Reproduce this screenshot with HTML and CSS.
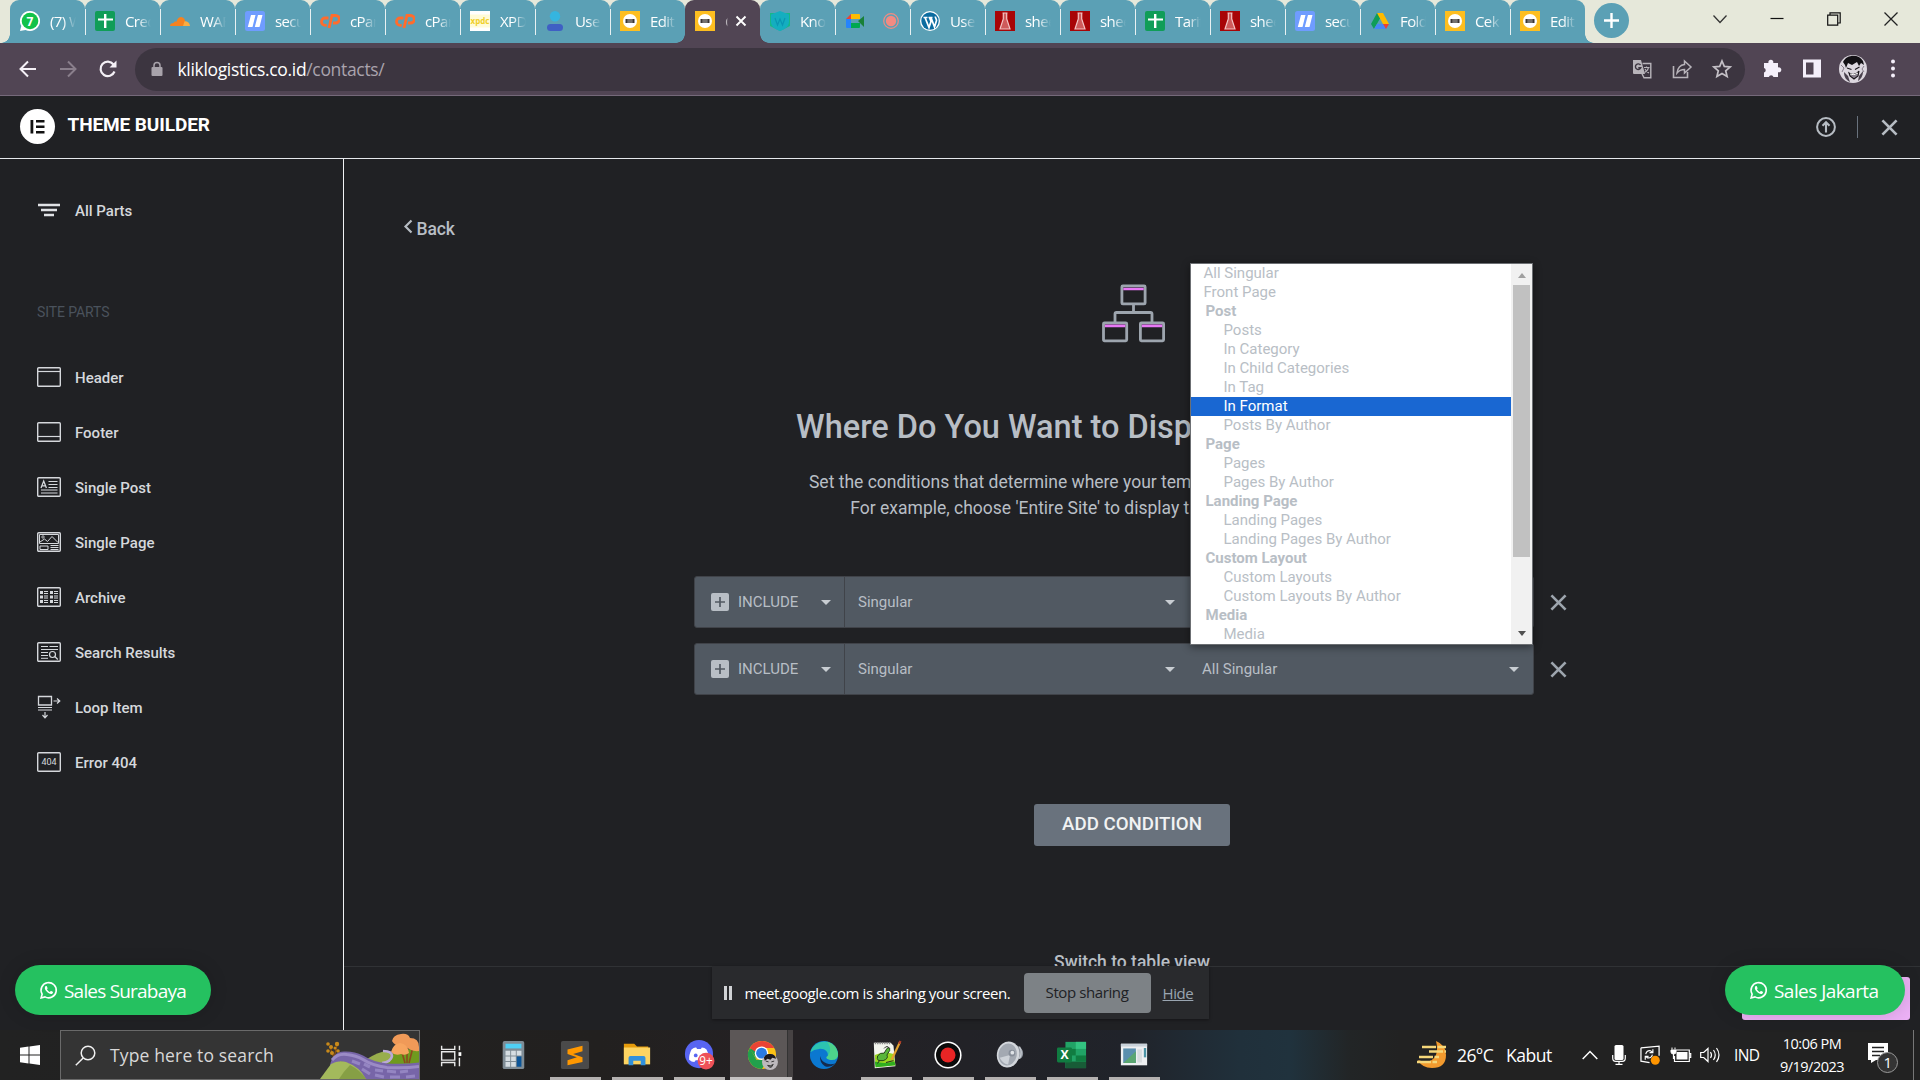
FILE: index.html
```html
<!DOCTYPE html>
<html lang="en">
<head>
<meta charset="utf-8">
<title>Theme Builder</title>
<link rel="stylesheet" href="styles.css">
</head>
<body>
<svg class="defs" aria-hidden="true">
  <symbol id="i-sheet" viewBox="0 0 20 20"><rect width="20" height="20" rx="2" fill="#109d58"/><path d="M9 3h2.400v4.400H18v2.200h-6.600V17H9V9.600H3V7.400h6z" fill="#fff"/></symbol>
  <symbol id="i-wa" viewBox="0 0 20 20"><path d="M10 0a10 10 0 1 1-4.500 18.900L0 20l1.300-5A10 10 0 0 1 10 0z" fill="#fff"/><circle cx="10" cy="10" r="8.300" fill="#12c24a"/><text x="10" y="14.500" text-anchor="middle" font-size="12" font-weight="700" fill="#fff">7</text></symbol>
  <symbol id="i-cloud" viewBox="0 0 20 20"><path d="M0 15c0-2 1.500-3 3.500-3 .4-1.500 2-2 3-1.300C7.500 7 10 5.700 12 6.200c2 .5 3 2 3.200 4.300L13.500 15z" fill="#f6821f"/><path d="M13 15l1.500-4.800c3-.2 5.300 1.600 5.500 4.800z" fill="#fbad41"/></symbol>
  <symbol id="i-sec" viewBox="0 0 20 20"><rect width="20" height="20" rx="2.500" fill="#6f9cff"/><path d="M6 4h4.500L7.500 16H2.800zM13 4h4.500l-3 12H9.800z" fill="#fff"/></symbol>
  <symbol id="i-cp" viewBox="0 0 20 20"><path d="M8.500 7H5.200a3.700 3.700 0 0 0 0 7.400h1.500M9 17l3-12.500h3.600a3.600 3.600 0 0 1 0 7.500H13" fill="none" stroke="#ff6c2c" stroke-width="2.800"/></symbol>
  <symbol id="i-xpdc" viewBox="0 0 20 20"><rect width="20" height="20" fill="#fff"/><rect y="3.500" width="20" height="13" fill="#fffbd8"/><text x="10" y="12.500" text-anchor="middle" font-size="8" font-weight="700" fill="#f0cf28">xpdc</text></symbol>
  <symbol id="i-user" viewBox="0 0 20 20"><circle cx="10" cy="5.300" r="5.200" fill="#35b5e0"/><rect x="2" y="13" width="16" height="7" rx="3.500" fill="#3f5fc4"/></symbol>
  <symbol id="i-gold" viewBox="0 0 20 20"><rect width="20" height="20" fill="#fdbe20"/><circle cx="10" cy="10" r="7" fill="#fff"/><path d="M5.500 8h2.300v4H5.500zM8.300 8h1.400v4H8.300zM10.300 8h1.400v4h-1.400zM12.200 8h2.300v4h-2.300z" fill="#3a3534"/></symbol>
  <symbol id="i-shield" viewBox="0 0 20 20"><path d="M0 2h20v13l-10 5-10-5z" fill="#16b887"/><path d="M10 0l9 3.500v7c0 5-4 7.500-9 9.500-5-2-9-4.500-9-9.500v-7z" fill="#14aec0"/><path d="M5 7l2.500 7L10 8l2.500 6L15 7" fill="none" stroke="#0b95b2" stroke-width="1.200"/></symbol>
  <symbol id="i-meet" viewBox="0 0 20 20"><path d="M1 8l5-5v5z" fill="#ea4335"/><path d="M6 3h8a1 1 0 0 1 1 1v4H6z" fill="#fbbc04"/><path d="M1 8h5v9H2a1 1 0 0 1-1-1z" fill="#2684fc"/><path d="M6 12h9v4a1 1 0 0 1-1 1H6z" fill="#00a84f"/><path d="M13 10l6-5v11z" fill="#188038"/></symbol>
  <symbol id="i-wp" viewBox="0 0 20 20"><circle cx="10" cy="10" r="10" fill="#fff"/><circle cx="10" cy="10" r="8.700" fill="#0c6ca0"/><path d="M3.500 6.500h4M5 6.500l4 10 2-6-1.500-4M8.500 6.500h4M11 6.500l3.500 9.500 2-6.500c0-2-1.500-2.500-1-4" fill="none" stroke="#fff" stroke-width="1.700"/></symbol>
  <symbol id="i-flask" viewBox="0 0 20 20"><rect width="20" height="20" fill="#a80507"/><path d="M7.500 2h5M8.300 2v6L5 18h10L11.700 8V2" fill="#cf5a5a" stroke="#f3c4c4" stroke-width="1.200"/></symbol>
  <symbol id="i-drive" viewBox="0 0 20 20"><path d="M7 2h6l-3 5.500L4 18 1 13z" fill="#0f9d58"/><path d="M7 2h6l6 11h-6z" fill="#ffba00"/><path d="M4 18l3-5h12l-3 5z" fill="#4688f4"/><path d="M13 13h6l-3 5z" fill="#ea4335"/></symbol>
  <symbol id="i-chat" viewBox="0 0 20 20"><path d="M2.200 17.800l1.100-4a8 8 0 1 1 3 2.900z" fill="none" stroke="#fff" stroke-width="1.700"/><path d="M6.800 5.600c.5-.5 1.200-.5 1.500.1l.7 1.600c.2.400-.4 1.200-.7 1.500.6 1.300 1.700 2.200 3 2.800.5-.4.900-1.300 1.500-1.100l1.700.8c.6.300 0 1.600-.6 2-2.700 1.500-8.500-3.600-7.700-6.500.1-.5.300-.9.600-1.200z" fill="#fff"/></symbol>
  <symbol id="i-frame" viewBox="0 0 24 20"><rect x=".7" y=".7" width="22.600" height="18.600" rx="1" fill="none" stroke="#d5d8dc" stroke-width="1.400"/></symbol>
  <symbol id="i-x" viewBox="0 0 18 18"><path d="M1.500 1.500l15 15m0-15l-15 15" fill="none" stroke="currentColor" stroke-width="2.800"/></symbol>
</svg>

<div class="tabstrip">
  <div class="tab first"><svg class="fav"><use href="#i-wa"/></svg><span>(7) W</span></div>
  <div class="tab"><svg class="fav"><use href="#i-sheet"/></svg><span>Cred</span></div>
  <div class="tab"><svg class="fav"><use href="#i-cloud"/></svg><span>WAF</span></div>
  <div class="tab"><svg class="fav"><use href="#i-sec"/></svg><span>secu</span></div>
  <div class="tab"><svg class="fav"><use href="#i-cp"/></svg><span>cPan</span></div>
  <div class="tab"><svg class="fav"><use href="#i-cp"/></svg><span>cPan</span></div>
  <div class="tab"><svg class="fav"><use href="#i-xpdc"/></svg><span>XPDC</span></div>
  <div class="tab"><svg class="fav"><use href="#i-user"/></svg><span>User</span></div>
  <div class="tab before"><svg class="fav"><use href="#i-gold"/></svg><span>Edit</span></div>
  <div class="tab active"><svg class="fav"><use href="#i-gold"/></svg><span class="sliver">C</span><svg class="tabx" viewBox="0 0 12 12"><path d="M1.500 1.500l9 9m0-9l-9 9" stroke="#fff" stroke-width="1.900"/></svg></div>
  <div class="tab after"><svg class="fav"><use href="#i-shield"/></svg><span>Know</span></div>
  <div class="tab"><svg class="fav"><use href="#i-meet"/></svg><svg class="rec" viewBox="0 0 16 16"><circle cx="8" cy="8" r="7.300" fill="none" stroke="#f28b82" stroke-width="1.200"/><circle cx="8" cy="8" r="5.200" fill="#f28b82"/></svg></div>
  <div class="tab"><svg class="fav"><use href="#i-wp"/></svg><span>User</span></div>
  <div class="tab"><svg class="fav"><use href="#i-flask"/></svg><span>shee</span></div>
  <div class="tab"><svg class="fav"><use href="#i-flask"/></svg><span>shee</span></div>
  <div class="tab"><svg class="fav"><use href="#i-sheet"/></svg><span>Tarif</span></div>
  <div class="tab"><svg class="fav"><use href="#i-flask"/></svg><span>shee</span></div>
  <div class="tab"><svg class="fav"><use href="#i-sec"/></svg><span>secu</span></div>
  <div class="tab"><svg class="fav"><use href="#i-drive"/></svg><span>Fold</span></div>
  <div class="tab"><svg class="fav"><use href="#i-gold"/></svg><span>Cek</span></div>
  <div class="tab last"><svg class="fav"><use href="#i-gold"/></svg><span>Edit</span></div>
  <svg class="newtab" viewBox="0 0 35 35"><circle cx="17.500" cy="17.500" r="17.500" fill="#5ba0b5"/><path d="M17.500 10v15M10 17.500h15" stroke="#fff" stroke-width="2.400"/></svg>
  <div class="winctl">
    <svg viewBox="0 0 14 14"><path d="M.5 3.500l6.500 7 6.500-7" fill="none" stroke="#333" stroke-width="1.300"/></svg>
    <svg viewBox="0 0 14 14"><path d="M.5 6.500h13" stroke="#111" stroke-width="1.200"/></svg>
    <svg viewBox="0 0 14 14"><path d="M.7 3.200h10v10h-10zM3 3V.8h10.200V11H11" fill="none" stroke="#111" stroke-width="1.200"/></svg>
    <svg viewBox="0 0 14 14"><path d="M.5.5l13 13m0-13l-13 13" stroke="#222" stroke-width="1.300"/></svg>
  </div>
</div>

<div class="toolbar">
  <div class="nav">
    <svg viewBox="0 0 18 18"><path d="M17 9H2M9 1.500L1.500 9 9 16.500" fill="none" stroke="#f4f0f6" stroke-width="2"/></svg>
    <svg viewBox="0 0 18 18"><path d="M1 9h15M9 1.500L16.500 9 9 16.500" fill="none" stroke="#8a7f8c" stroke-width="2"/></svg>
    <svg viewBox="0 0 18 18"><path d="M15.500 11.500A7.200 7.200 0 1 1 14.500 4.500" fill="none" stroke="#f4f0f6" stroke-width="2.200"/><path d="M17.500.5v7h-7z" fill="#f4f0f6"/></svg>
  </div>
  <div class="omnibox">
    <svg class="lock" viewBox="0 0 12 14"><rect x=".5" y="5" width="11" height="9" rx="1" fill="#a8a3ab"/><path d="M3 6V3.600a3 3 0 0 1 6 0V6" fill="none" stroke="#a8a3ab" stroke-width="1.500"/></svg>
    <div class="url">kliklogistics.co.id<i>/contacts/</i></div>
    <div class="omni-icons">
      <svg viewBox="0 0 20 20"><path d="M1 1h8l4 14H2a1 1 0 0 1-1-1z" fill="#b8b4ba"/><path d="M10.500 4.500h8.300v14.300H12l-2-4" fill="none" stroke="#b8b4ba" stroke-width="1.400"/><path d="M8.500 6A2.800 2.800 0 1 0 8.800 8.800H6.300" fill="none" stroke="#3c3540" stroke-width="1.400"/><path d="M12 8.500h5.500M14.500 7.500V9M16.500 8.500c-.5 2.500-2 4-4 5M13 10c1 2 2 3 4 4" fill="none" stroke="#b8b4ba" stroke-width="1.100"/></svg>
      <svg viewBox="0 0 20 20"><path d="M1.500 7v11.500h14V13" fill="none" stroke="#b8b4ba" stroke-width="1.600"/><path d="M12.500 2l6.500 6-6.500 6v-3.500c-3.500 0-5.500 1-7.500 3.500.6-4.500 3-8 7.500-8.500z" fill="none" stroke="#b8b4ba" stroke-width="1.500"/></svg>
      <svg viewBox="0 0 20 20"><path d="M10 2l2.300 5.400 5.900.5-4.500 3.900 1.400 5.700L10 14.500l-5.100 3 1.400-5.700L1.800 7.900l5.900-.5z" fill="none" stroke="#c4c0c6" stroke-width="1.700"/></svg>
    </div>
  </div>
  <div class="tb-icons">
    <svg viewBox="0 0 20 20"><path d="M2 4h4.500a2.500 2.500 0 1 1 4.700 0H16v4.500a2.500 2.500 0 1 1 0 4.700V18h-4.500a2.500 2.500 0 0 0-4.700 0H2v-4.500a2.400 2.400 0 0 0 0-4.600z" fill="#f4effa"/></svg>
    <svg viewBox="0 0 20 20"><path d="M1 .5h18v18H1zM4 3.500v12h7.500v-12z" fill="#f4effa" fill-rule="evenodd"/></svg>
    <svg class="avatar" viewBox="0 0 28 28"><circle cx="14" cy="14" r="14" fill="#dcd7df"/><path d="M4 7C8-1 20-1 24 6l1 4-3-2-2 3-2-4-5 3-4-2-2 5-1-3z" fill="#121014"/><path d="M8 13l4.500 1.500M16 14.500l4.500-2.500M10 18c4 3 7 2 10-2l-1 5-4 3-4-3z" stroke="#1a161c" stroke-width="1.100" fill="#8a8290"/><path d="M11 19q4 2 8-1" stroke="#fff" fill="none"/><path d="M5 17l4 4 2 6C7 25 5 22 5 17zM24 16l-4 5-1 5c3-2 5-5 5-10z" fill="#4a424e"/><path d="M2 10l3 3-2 4M25 11l-2 3 2 3" stroke="#847b88" fill="none"/></svg>
    <svg class="dots" viewBox="0 0 20 20"><g fill="#f4effa"><circle cx="10" cy="2.500" r="2"/><circle cx="10" cy="9.500" r="2"/><circle cx="10" cy="16.500" r="2"/></g></svg>
  </div>
</div>

<header class="apphead">
  <svg class="logo" viewBox="0 0 35 35"><circle cx="17.500" cy="17.500" r="17.500" fill="#fff"/><path d="M10.500 11h2.800v13.500h-2.800zM16 11h8.500v2.600H16zM16 16.400h8.500V19H16zM16 21.900h8.500v2.600H16z" fill="#111"/></svg>
  <h1>THEME BUILDER</h1>
  <svg class="up" viewBox="0 0 20 20"><circle cx="10" cy="10" r="8.900" fill="none" stroke="#b6bcc3" stroke-width="2"/><path d="M10 15.500V6M6.500 8.800L10 5.300l3.500 3.500" fill="none" stroke="#b6bcc3" stroke-width="2.100"/></svg>
  <span class="vline"></span>
  <svg class="close"><use href="#i-x"/></svg>
</header>

<div class="work">
  <aside>
    <div class="item all"><svg viewBox="0 0 24 20"><path d="M1 5h22M4 10h16M7 15h10" stroke="#e0e2e5" stroke-width="2.300"/></svg>All Parts</div>
    <h2>SITE PARTS</h2>
    <div class="item"><svg viewBox="0 0 24 20"><use href="#i-frame"/><path d="M1 4.500h22" stroke="#d5d8dc" stroke-width="1.200"/></svg>Header</div>
    <div class="item"><svg viewBox="0 0 24 20"><use href="#i-frame"/><path d="M1 14.500h22" stroke="#d5d8dc" stroke-width="1.200"/></svg>Footer</div>
    <div class="item"><svg viewBox="0 0 24 20"><use href="#i-frame"/><path d="M11.500 4.500h9M11.500 7.500h9M11.500 10.500h9M4 13h16.500M4 16h16.500" stroke="#d5d8dc"/><path d="M4 11l2.700-7 2.700 7M5 8.800h3.500" fill="none" stroke="#d5d8dc" stroke-width="1.300"/></svg>Single Post</div>
    <div class="item"><svg viewBox="0 0 24 20"><use href="#i-frame"/><path d="M2.500 2.500h19v9h-19zM3 10l4.500-3 3 2.500 4.500-5 6 6M3 14h8v3.500H3zM13.500 13.500h8M13.500 15.500h8M13.500 17.500h8" fill="none" stroke="#d5d8dc"/><circle cx="6" cy="5" r="1.200" fill="none" stroke="#d5d8dc" stroke-width=".8"/></svg>Single Page</div>
    <div class="item"><svg viewBox="0 0 24 20"><use href="#i-frame"/><path d="M4.500 4v13M14.500 4v13" stroke="#d5d8dc" stroke-width="3" stroke-dasharray="3 1.500"/><path d="M7 4.500h4M7 6.500h4M7 9h4M7 11h4M7 13.500h4M7 15.500h4M17 4.500h4M17 6.500h4M17 9h4M17 11h4M17 13.500h4M17 15.500h4" stroke="#d5d8dc"/></svg>Archive</div>
    <div class="item"><svg viewBox="0 0 24 20"><use href="#i-frame"/><path d="M4 4.500h7M12.500 4.500H21M4 7.500h17M4 10.500h7M4 13.500h7M4 16.300h7" stroke="#d5d8dc"/><circle cx="15.500" cy="12.500" r="3" fill="none" stroke="#d5d8dc" stroke-width="1.200"/><path d="M17.800 14.500l3 3" stroke="#d5d8dc" stroke-width="1.200"/></svg>Search Results</div>
    <div class="item"><svg class="tall" viewBox="0 0 24 24"><path d="M1.500 1.500h13v8.500h-13z" fill="none" stroke="#d5d8dc" stroke-width="1.300"/><path d="M1 12.500h14M1 15h14M16.500 6h6M20 3.500L22.800 6 20 8.500M8 17v5.500M5.500 20L8 22.800l2.500-2.800" fill="none" stroke="#d5d8dc" stroke-width="1.200"/></svg>Loop Item</div>
    <div class="item"><svg viewBox="0 0 24 20"><use href="#i-frame"/><text x="12" y="13.300" text-anchor="middle" font-size="9" font-weight="400" fill="#d5d8dc">404</text></svg>Error 404</div>
  </aside>

  <main>
    <div class="pane">
      <div class="back"><svg viewBox="0 0 9 15"><path d="M7.500 1.500l-6 6 6 6" fill="none" stroke="#b6bcc3" stroke-width="2.200"/></svg>Back</div>
      <svg class="tree" viewBox="0 0 64 59"><g fill="none" stroke="#9da5ae" stroke-width="2.800"><rect x="19.900" y="1.900" width="23.200" height="18" rx="1"/><rect x="1.500" y="38.800" width="23.200" height="18" rx="1"/><rect x="38.400" y="38.800" width="23.200" height="18" rx="1"/><path d="M31.500 20v8.700M13 38V30q0-1.500 1.500-1.500h34q1.500 0 1.500 1.500v8"/></g><path d="M21.300 5h20.400M2.900 41.900h20.400M39.800 41.900h20.400" stroke="#e877f5" stroke-width="2.600"/></svg>
      <h3>Where Do You Want to Display Your Template?</h3>
      <p>Set the conditions that determine where your template is used throughout your site.<br>For example, choose 'Entire Site' to display the template across your site.</p>

      <div class="cond">
        <div class="selects">
          <div class="inc"><svg class="plus" viewBox="0 0 18 18"><rect width="18" height="18" rx="2" fill="#b8bec5"/><path d="M9 4v10M4 9h10" stroke="#515962" stroke-width="1.700"/></svg>INCLUDE<i class="caret"></i></div>
          <div class="sel kind">Singular<i class="caret"></i></div>
          <div class="sel what"><i class="caret"></i></div>
          <div class="menu">
            <ul>
              <li class="top">All Singular</li><li class="top">Front Page</li>
              <li class="grp">Post</li><li>Posts</li><li>In Category</li><li>In Child Categories</li><li>In Tag</li><li class="hot">In Format</li><li>Posts By Author</li>
              <li class="grp">Page</li><li>Pages</li><li>Pages By Author</li>
              <li class="grp">Landing Page</li><li>Landing Pages</li><li>Landing Pages By Author</li>
              <li class="grp">Custom Layout</li><li>Custom Layouts</li><li>Custom Layouts By Author</li>
              <li class="grp">Media</li><li>Media</li>
            </ul>
            <div class="sbar"><i class="arr up-arr"></i><div class="thumb"></div><i class="arr down-arr"></i></div>
          </div>
        </div>
        <svg class="del"><use href="#i-x"/></svg>
      </div>
      <div class="cond">
        <div class="selects">
          <div class="inc"><svg class="plus" viewBox="0 0 18 18"><rect width="18" height="18" rx="2" fill="#b8bec5"/><path d="M9 4v10M4 9h10" stroke="#515962" stroke-width="1.700"/></svg>INCLUDE<i class="caret"></i></div>
          <div class="sel kind">Singular<i class="caret"></i></div>
          <div class="sel what">All Singular<i class="caret"></i></div>
        </div>
        <svg class="del"><use href="#i-x"/></svg>
      </div>
      <button class="add">ADD CONDITION</button>
      <div class="switch">Switch to table view</div>
    </div>
    <footer></footer>
  </main>

  <div class="chat left"><svg><use href="#i-chat"/></svg><span>Sales Surabaya</span></div>
  <div class="pink"></div>
  <div class="chat right"><svg><use href="#i-chat"/></svg><span>Sales Jakarta</span></div>
  <div class="share">
    <i class="pause"></i><span class="msg">meet.google.com is sharing your screen.</span><span class="stop">Stop sharing</span><span class="hide">Hide</span>
  </div>
</div>

<div class="taskbar">
  <div class="start"><svg viewBox="0 0 20 20"><path d="M0 2.800l8.500-1.200v8H0zM9.500 1.400L20 0v9.600H9.500zM0 10.500h8.500v8L0 17.300zM9.500 10.500H20V20L9.500 18.600z" fill="#fff"/></svg></div>
  <div class="search">
    <svg class="mag" viewBox="0 0 21 21"><circle cx="13" cy="8" r="6.800" fill="none" stroke="#f0f0f0" stroke-width="1.500"/><path d="M8.200 13L.8 20.300" stroke="#f0f0f0" stroke-width="1.500"/></svg>
    <span>Type here to search</span>
    <svg class="art" viewBox="0 0 99 48">
      <path d="M62 32Q70 17 99 18v16H62z" fill="#6f9a1e"/>
      <path d="M14 27L10 16M14 27l3-13" stroke="#8a4f10" stroke-width="1.300" fill="none"/>
      <g fill="#c98a1a"><circle cx="8" cy="13" r="1.800"/><circle cx="11" cy="16" r="2"/><circle cx="17" cy="13" r="2.200"/><circle cx="8" cy="20" r="1.800"/><circle cx="12" cy="22" r="2"/><circle cx="18" cy="20" r="1.800"/><circle cx="15" cy="17" r="1.500"/></g>
      <path d="M85 32L81 18M87 32V18M89 32l4-16" stroke="#8c4a1e" stroke-width="1.600"/>
      <path d="M72 10q1-6 9-7 7-1 9 4 9 0 9 9v4q-8 1-14-5-9 2-13-5z" fill="#f09a58"/><path d="M71 21q2-8 9-9 8 1 9 10-4 3-8 1-6 2-10-2z" fill="#f7a55f"/>
      <path d="M47 28Q58 21 66 20q8 1 7 6-3 7-12 7-8-1-14-5z" fill="#98ae4c"/><path d="M63 20q9 0 9 5-1 6-10 7" fill="none" stroke="#b9a9d6" stroke-width="2.600"/>
      <path d="M10 35Q12 21 24 20.500q10-.5 19 4 9 6 24 8 18 1 32-1V48H42Q36 34 24 31q-8-1-14 4z" fill="#7765a8"/>
      <path d="M12 29Q18 22 27 23.500q9 1 16 5 9 6 24 8 18 1 32-1" fill="none" stroke="#9b8bc6" stroke-width="3"/>
      <path d="M32 30l8 3M42 38l8 5M44 33l6 3M55 39l8 1M67 40l9 1M80 41l8-1M55 44l9 2M70 46l10 0M86 46l9-1" fill="none" stroke="#9485c2" stroke-width="3.200"/>
      <path d="M0 48L11 33Q18 29 26 31q14 5 20 17z" fill="#a3b95c"/><path d="M19 48q5-8 11-14 10 5 16 14z" fill="#6f8a33" opacity=".55"/>
    </svg>
  </div>
  <div class="apps">
    <div class="app"><svg viewBox="0 0 32 32"><path d="M6 6v4h14V6M6 28v-4h14v4M6 12.500h14v9H6zM25 6v5M25 19v9" fill="none" stroke="#e9e9e9" stroke-width="1.500"/><path d="M24 13h3v4h-3z" fill="#fff"/></svg></div>
    <div class="app"><svg viewBox="0 0 32 32"><rect x="5" y="1" width="23" height="30" rx="2" fill="#7f8c95"/><rect x="8" y="4" width="17" height="5" fill="#4fd0f5"/><path d="M8 11.500h5v5H8zM14 11.500h5v5h-5zM20 11.500h5v5h-5zM8 17.500h5v5H8zM14 17.500h5v5h-5zM8 23.500h5v5H8zM14 23.500h5v5h-5z" fill="#d5dde2"/><path d="M20 17.500h5v11h-5z" fill="#0b5598"/></svg></div>
    <div class="app run"><svg viewBox="0 0 32 32"><rect x="1" y="1" width="30" height="30" rx="2" fill="#4a4a4a"/><path d="M24 6v6l-10 3 10 3.500v5L8 27v-5.500l10-3L8 15V10z" fill="#ff9800"/></svg></div>
    <div class="app run"><svg viewBox="0 0 32 32"><path d="M2 4h11l3 3h12v18H2z" fill="#e59b0b"/><path d="M2 8h28v18H2z" fill="#fcd462"/><path d="M7 27v-8q0-2 2-2h14q2 0 2 2v8h-5v-5h-8v5z" fill="#3190db"/></svg></div>
    <div class="app run"><svg viewBox="0 0 32 32"><circle cx="16" cy="15" r="15" fill="#5865f2"/><path d="M8 10q3-2.500 5-2l1 1.500h4L19 8q3 0 5 2 3 6 2.500 11-3 2.500-5.500 2.500l-1.500-2h-7l-1.500 2q-3 0-5.500-2.500Q5 16 8 10z" fill="#fff"/><circle cx="12.500" cy="16.500" r="2" fill="#5865f2"/><circle cx="23.500" cy="22.500" r="9" fill="#ee5158"/><text x="23.500" y="27" text-anchor="middle" font-size="12.500" fill="#fff">9+</text></svg></div>
    <div class="app run on"><svg viewBox="0 0 32 32"><circle cx="16" cy="16" r="15" fill="#fbc116"/><path d="M3 8.500A15 15 0 0 0 16 31l6-10H10z" fill="#22a04c"/><path d="M2.700 9L10 20l4-11z" fill="#22a04c"/><path d="M3 8.500A15 15 0 0 1 29 8.500H14l-5 4z" fill="#ea4335"/><circle cx="15.500" cy="14" r="7.200" fill="#fff"/><circle cx="15.500" cy="14" r="5.800" fill="#2a7be4"/><circle cx="24.500" cy="23.500" r="8.500" fill="#bdb9bd"/><path d="M18 19q2-5 7-4 5 0 6 5l-4-1-2 2-3-1-3 2z" fill="#1b181c"/><path d="M20 22.500l3 .8M26 23.300l3-.8M22 27q3 1.500 6-1l-2 3h-2z" stroke="#333" fill="#777"/></svg></div>
    <div class="app"><svg viewBox="0 0 32 32"><circle cx="16" cy="16" r="15" fill="#0b78d0"/><path d="M1.500 13A15 15 0 0 1 31 15c0 6-5 7-9 6-4-1-4-3-2-4 1-4-3-8-9-7.500Q5 10 1.500 13z" fill="#2cc3b0"/><path d="M19 1.500Q30 4 31 15c0 6-5 7-9 6-4-1-4-3-2-4 2-3 5-8-1-15.500z" fill="#5fdb78" opacity=".65"/><path d="M12 17q-1 7 5 11 6 2 11-3-5 1.500-9 0-6-2-7-8z" fill="#152a4d"/></svg></div>
    <div class="app run"><svg viewBox="0 0 32 32"><path d="M3 3h18l3 3 2 22-22 2z" fill="#f3f5ee"/><path d="M4 16q10-4 20-1l2 12-21 2z" fill="#9ad61f"/><path d="M4 23q10 3 21 0l1 4-21 2z" fill="#2fae1f"/><path d="M7 17q3-4 7-3l3-5q3-2 3 2l-3 5q2 4-4 6H8q-2-2-1-5z" fill="#58b63a" stroke="#1f3f18"/><path d="M14 9q3-4 6 0M9 22l-2 3M16 24l8-2" stroke="#222" fill="none"/><path d="M4 3.500h17" stroke="#888" stroke-dasharray="1.500 1" stroke-width="2"/><path d="M31 2l-9 19" stroke="#e2a22e" stroke-width="2.400"/><path d="M31.500 1l-1.500 3" stroke="#b03b2a" stroke-width="2.400"/></svg></div>
    <div class="app run"><svg viewBox="0 0 32 32"><circle cx="16" cy="16" r="14.500" fill="#fff"/><circle cx="16" cy="16" r="12.800" fill="#0b0b0b"/><circle cx="16" cy="16" r="8" fill="#e82525"/></svg></div>
    <div class="app run"><svg viewBox="0 0 32 32"><path d="M16 2l8 4q6 3 6 8t-4 6l-10 8z" fill="#8f959e"/><path d="M26 7q4 6 0 13" fill="none" stroke="#c4c9cf" stroke-width="1.500"/><ellipse cx="14" cy="15.500" rx="12" ry="14" fill="#d3d7dc" transform="rotate(12 14 15.500)"/><ellipse cx="13.500" cy="15.500" rx="9.700" ry="11.700" fill="#a3a9b2" transform="rotate(12 13.500 15.500)"/><path d="M5 19q4 7 9 7l2-10z" fill="#cdd2d8"/><circle cx="18" cy="14" r="3.500" fill="#878e99"/><circle cx="18.500" cy="13.500" r="2" fill="#dfe3e7"/></svg></div>
    <div class="app run"><svg viewBox="0 0 32 32"><path d="M9 2h22v28H9z" fill="#21a366"/><path d="M20 2h11v7.500H20z" fill="#33c481"/><path d="M9 9.500h11v7H9z" fill="#107c41"/><path d="M9 23h22v7H9z" fill="#185c37"/><path d="M20 16.500h11V23H20z" fill="#107c41"/><rect x="0" y="8" width="16" height="16" rx="1.500" fill="#107c41"/><text x="8" y="20.500" text-anchor="middle" font-size="13" font-weight="700" fill="#fff">X</text></svg></div>
    <div class="app run"><svg viewBox="0 0 32 32"><path d="M2 4h28v23H2z" fill="#eef0f2"/><path d="M2 4h28v3H2z" fill="#c9d2da"/><path d="M4.500 9H18v15.500H4.500z" fill="#5a8fae"/><path d="M4.500 24.500L18 12v12.500z" fill="#5ba671"/><path d="M19.500 10h5v14h-5z" fill="#d8dcdf"/><path d="M26.500 8.500h2.500v10h-2.500z" fill="#4b93a5"/></svg></div>
  </div>
  <div class="tray">
    <svg class="moon" viewBox="0 0 30 28"><path d="M19 0q10 4 10 14 0 13-14 13Q5 27 1 19q13 5 18-5 2-6 0-14z" fill="#f29a2e"/><path d="M5 6h24M12 10.500h17M2 16h20M0 21h20" stroke="#f5d77a" stroke-width="2.600" stroke-dasharray="14 1.500 30"/></svg>
    <span class="temp">26°C</span><span class="fog">Kabut</span>
    <svg class="chev" viewBox="0 0 16 16"><path d="M.7 12L8 4.500l7.300 7.500" fill="none" stroke="#fff" stroke-width="1.500"/></svg>
    <svg class="mic" viewBox="0 0 14 20"><rect x="2.500" y="0" width="9" height="15" rx="1.500" fill="#fff"/><path d="M.7 10v3q0 3.300 3 3.300h6.600q3 0 3-3.300v-3M7 16.500v3M3.500 19.400h7" fill="none" stroke="#fff" stroke-width="1.200"/></svg>
    <svg class="upd" viewBox="0 0 22 20"><path d="M1 2.500L20 .8v10M10 18L1 16.500V2.500" fill="none" stroke="#fff" stroke-width="1.300"/><path d="M6 9q1-4 5-3.500l2 1.500M13.500 4v3.500H10M13 9.500q-1 4-5 3.500l-2-1.500M5.500 15v-3.500H9" fill="none" stroke="#fff" stroke-width="1.200"/><circle cx="16" cy="15.500" r="4.700" fill="#ff9500"/></svg>
    <svg class="bat" viewBox="0 0 21 16"><rect x="6.500" y="5" width="11" height="7.500" fill="#fff"/><path d="M6 3h13.300v11.500H4.500V9M19.500 6.500h1.200v4h-1.200M3.500 6v6" fill="none" stroke="#fff" stroke-width="1.200"/><path d="M1 3h5v2q0 2-2.500 2T1 5zM2 .5v2M5 .5v2" fill="#fff" stroke="#fff"/></svg>
    <svg class="vol" viewBox="0 0 21 16"><path d="M.7 5.500h3L8 1.500v13l-4.300-4h-3zM10.500 5q2 3 0 6M13.500 3q3.500 5 0 10M16.500 1q5 7 0 14" fill="none" stroke="#fff" stroke-width="1.200"/></svg>
    <span class="lang">IND</span>
    <div class="clock"><span>10:06 PM</span><span>9/19/2023</span></div>
    <svg class="note" viewBox="0 0 32 32"><path d="M1 1h20v17H9l-5 3v-3H1z" fill="#fff"/><path d="M5 5.500h12M5 9.500h12M5 13.500h8" stroke="#222" stroke-width="1.500"/><circle cx="20.500" cy="20.500" r="10" fill="#343434" stroke="#999"/><text x="20.500" y="26" text-anchor="middle" font-size="15" fill="#fff">1</text></svg>
  </div>
</div>
</body>
</html>
```
FILE: styles.css
```css
* { box-sizing: border-box; }
html, body { margin: 0; height: 1080px; overflow: hidden; }
body { display: flex; flex-direction: column; width: 1920px; background: #202124; color: #b8bec5; font-family: Roboto, sans-serif; }
svg { display: block; flex: none; overflow: visible; }
i { font-style: normal; }
.defs { position: absolute; width: 0; height: 0; }

/* tab strip */
.tabstrip { display: flex; height: 43px; flex: none; background: #e6e8da; padding-left: 10px; font-family: "Open Sans", sans-serif; font-size: 15px; color: #fff; }
.tab { position: relative; display: flex; align-items: center; width: 75px; height: 43px; padding: 0 0 1px 10px; background: #5ba0b5; border-radius: 9px 9px 0 0; flex: none; }
.tab::after { content: ""; position: absolute; right: -1px; top: 9px; width: 1px; height: 26px; background: #e8f1f2; z-index: 1; }
.tab span { width: 26px; margin: -1px 0 0 10px; overflow: hidden; white-space: nowrap; letter-spacing: -.6px; -webkit-mask-image: linear-gradient(90deg, #000 50%, transparent); mask-image: linear-gradient(90deg, #000 50%, transparent); }
.fav { width: 20px; height: 20px; }
.tab.active { background: #514554; }
.tab.active::after { display: none; }
.tab.before::after, .tab.last::after, .tab.first::before, .tab.after::before { content: ""; position: absolute; top: auto; bottom: 0; width: 9px; height: 9px; }
.tab.first::before { left: -9px; background: radial-gradient(circle at 0 0, #e6e8da 8.500px, #5ba0b5 9px); }
.tab.last::after { right: -9px; background: radial-gradient(circle at 100% 0, #e6e8da 8.500px, #5ba0b5 9px); }
.tab.before::after { right: 0; background: radial-gradient(circle at 0 0, #5ba0b5 8.500px, #514554 9px); }
.tab.after::before { left: 0; background: radial-gradient(circle at 100% 0, #5ba0b5 8.500px, #514554 9px); }
.tab .sliver { width: 3px; opacity: .6; }
.tabx { width: 12px; height: 12px; margin-left: 7px; }
.rec { width: 16px; height: 16px; margin-left: 18px; }
.newtab { width: 35px; height: 35px; margin: 3px 0 0 8.500px; }
.winctl { display: flex; gap: 43px; margin: 12px 0 0 auto; padding-right: 22px; }
.winctl svg { width: 14px; height: 14px; }

/* address bar */
.toolbar { display: flex; align-items: center; height: 53px; flex: none; background: #514554; border-bottom: 1px solid #75697a; }
.nav { display: flex; gap: 22px; padding-left: 19px; width: 135px; }
.nav svg { width: 18px; height: 18px; }
.omnibox { display: flex; align-items: center; width: 1610px; height: 43px; border-radius: 22px; background: #3c3540; padding-left: 16px; }
.lock { width: 12px; height: 14px; }
.url { margin-left: 14.500px; color: #fff; font-family: "Open Sans", sans-serif; font-size: 17.500px; letter-spacing: -.33px; }
.url i { color: #aaa3ad; }
.omni-icons { display: flex; gap: 20px; margin-left: auto; padding-right: 13px; }
.omni-icons svg { width: 20px; height: 20px; }
.tb-icons { display: flex; align-items: center; margin-left: 17px; gap: 20px; }
.tb-icons svg { width: 20px; height: 20px; }
.tb-icons .avatar { width: 28px; height: 28px; margin: 0 -3px; }
.tb-icons .dots { margin-left: -1px; }

/* application header */
.apphead { display: flex; align-items: center; height: 63px; flex: none; padding: 0 22px 2px 20px; border-bottom: 1px solid #e6e9ec; color: #b6bcc3; }
.logo { width: 35px; height: 35px; }
h1 { margin: 0 auto 3px 12.500px; font-size: 19px; font-weight: 700; letter-spacing: -.1px; color: #fff; }
.up { width: 20px; height: 20px; margin-top: 2px; }
.vline { width: 1px; height: 22px; margin: 1px 23px 0 21px; background: #69727d; }
.close { width: 17px; height: 17px; margin-top: 2px; }

.work { position: relative; display: flex; height: 871px; flex: none; }

/* sidebar */
aside { width: 344px; border-right: 1px solid #f0f2f4; padding: 24px 0 0 37px; color: #d5d8dc; }
.item { display: flex; align-items: center; gap: 14px; height: 55px; font-size: 15px; font-weight: 500; }
.item svg { width: 24px; height: 20px; margin-top: -1px; }
.item svg.tall { height: 24px; }
h2 { margin: 65px 0 29px 0; height: 18px; line-height: 18px; font-size: 14px; font-weight: 400; letter-spacing: -.1px; color: #4a525c; }

/* conditions pane */
main { flex: 1; display: flex; flex-direction: column; }
.pane { height: 807px; overflow: hidden; padding: 60px 0 0 60px; display: flex; flex-direction: column; }
.back { display: flex; align-items: center; gap: 3.500px; height: 22px; font-size: 17.500px; font-weight: 500; letter-spacing: -.1px; }
.back svg { width: 9px; height: 15px; margin-top: -5px; }
h3, .pane p, .add, .switch { align-self: center; margin-right: 60px; }
.tree { align-self: center; width: 64px; height: 59px; margin: 45px 57px 0 0; }
h3 { margin-top: 64px; margin-bottom: 0; height: 40px; line-height: 40px; font-size: 32.500px; font-weight: 500; white-space: nowrap; }
.pane p { margin-top: 22px; margin-bottom: 55px; line-height: 26px; font-size: 17.500px; text-align: center; white-space: nowrap; }
.cond { display: flex; align-items: center; margin: 0 0 15px 290px; flex: none; }
.selects { position: relative; display: flex; width: 840px; height: 52px; background: #515962; border: 1px solid #404349; border-radius: 3px; font-size: 15px; }
.inc, .sel { position: relative; display: flex; align-items: center; height: 50px; }
.inc { width: 150px; padding: 0 13px 0 16px; border-right: 1px solid #404349; }
.plus { width: 18px; height: 18px; margin-right: 9px; }
.sel { width: 344px; padding: 0 14px 0 13px; }
.caret { margin-left: auto; border: 5px solid transparent; border-top-color: #c8cdd2; border-bottom: 0; }
.del { width: 17px; height: 17px; margin-left: 16px; color: #9da5ae; }
.add { width: 196px; height: 42px; margin-top: 94px; flex: none; padding: 0 0 2px; border: 0; border-radius: 3px; background: #69727d; color: #f1f2f3; font: 500 18.700px Roboto, sans-serif; }
.switch { margin-top: 104px; height: 24px; line-height: 24px; font-size: 17.500px; font-weight: 500; flex: none; }
footer { border-top: 1px solid #303235; }

/* open dropdown */
.menu { position: absolute; left: 495px; top: -314px; z-index: 3; display: flex; width: 343px; height: 382px; background: #fff; border: 1px solid #6c6f73; box-shadow: 0 2px 8px rgba(0,0,0,.45); color: #b8bec5; }
.menu ul { margin: 0; padding: 0; flex: 1; list-style: none; }
.menu li { height: 19px; line-height: 18px; padding-left: 32.500px; font-size: 15px; }
.menu .top { padding-left: 12.500px; }
.menu .grp { padding-left: 14.500px; font-weight: 700; }
.menu .hot { background: #1967d2; color: #fff; }
.sbar { display: flex; flex-direction: column; align-items: center; width: 21px; background: #f1f1f1; padding: 9px 0 8px; }
.thumb { width: 17px; height: 272px; margin-top: 7px; background: #c1c1c1; }
.arr { border: 4.500px solid transparent; }
.up-arr { border-top: 0; border-bottom-color: #a0a0a0; border-bottom-width: 5px; }
.down-arr { border-bottom: 0; border-top-color: #505050; border-top-width: 5px; margin-top: auto; }

/* floating buttons and the screen sharing bar */
.chat { position: absolute; top: 806px; display: flex; align-items: center; height: 50px; padding-left: 24px; border-radius: 25px; background: #25c160; color: #fff; font-family: "Open Sans", sans-serif; font-size: 19px; letter-spacing: -.6px; white-space: nowrap; box-shadow: 0 0 18px rgba(0,0,0,.15); z-index: 2; }
.chat svg { width: 19px; height: 19px; margin-right: 6px; }
.chat span { margin-top: 1px; }
.left { left: 15px; width: 196px; letter-spacing: -.8px; }
.right { left: 1725px; width: 180px; letter-spacing: -.55px; }
.pink { position: absolute; left: 1742px; top: 818px; width: 168px; height: 43px; border-radius: 3px; background: #ecb1f6; }
.share { position: absolute; left: 712px; top: 807px; display: flex; align-items: center; width: 497px; height: 53px; padding-left: 12px; background: #292a2d; box-shadow: 0 1px 3px #0006; font-family: "Open Sans", sans-serif; font-size: 15px; letter-spacing: -.4px; white-space: nowrap; }
.pause { width: 8px; height: 14px; border: solid #d0d2d5; border-width: 0 3px; }
.msg { width: 279px; margin-left: 12.500px; color: #fff; }
.stop { width: 127px; height: 40px; line-height: 39px; border-radius: 4px; background: #7d8286; color: #202124; text-align: center; }
.hide { margin-left: 12px; color: #9aa5b1; text-decoration: underline; }

/* taskbar */
.taskbar { display: flex; height: 50px; flex: none; color: #fff; font-family: "Open Sans", sans-serif; background: linear-gradient(90deg, #222 0, #22201f 600px, #242124 800px, #20232a 1130px, #20303b 1240px, #20323d 1290px, #222526 1350px, #222 1400px); }
.start { width: 60px; padding: 15px 0 0 20px; }
.start svg { width: 20px; height: 20px; }
.search { display: flex; align-items: center; width: 360px; height: 50px; background: #343434; border: 1px solid #6a6a6a; padding-left: 14px; font-size: 17.500px; color: #d8d8d8; white-space: nowrap; letter-spacing: .15px; }
.mag { width: 21px; height: 21px; }
.search span { margin-left: 14px; }
.art { width: 99px; height: 48px; margin-left: auto; overflow: hidden; }
.apps { display: flex; }
.app { position: relative; display: flex; justify-content: center; width: 62.100px; padding-top: 10px; }
.app svg { width: 30px; height: 30px; }
.app.run::after { content: ""; position: absolute; bottom: 0; left: 6px; width: 51px; height: 3px; background: #b4b1b0; }
.app.on { background: linear-gradient(90deg, #5c5757 57px, #333 57px, #333 58px, #464243 58px); }
.app.on::after { left: 0; width: 62px; background: #c5c2c2; }
.tray { display: flex; align-items: center; margin-left: auto; width: 503px; font-size: 17.500px; letter-spacing: -.6px; white-space: nowrap; }
.moon { width: 30px; height: 28px; }
.temp { width: 49px; margin-left: 10px; }
.fog { width: 76px; letter-spacing: -.5px; }
.chev { width: 16px; height: 16px; }
.mic { width: 14px; height: 20px; margin-left: 14px; }
.upd { width: 21px; height: 20px; margin-left: 14px; }
.bat { width: 21px; height: 16px; margin-left: 9px; }
.vol { width: 21px; height: 16px; margin-left: 9px; }
.lang { width: 43px; margin-left: 13px; font-size: 15.500px; letter-spacing: -.6px; }
.clock { display: flex; flex-direction: column; align-items: center; width: 70px; font-size: 14.500px; line-height: 23px; letter-spacing: -.5px; }
.note { width: 32px; height: 32px; margin: 6px 0 0 20px; }
.tray::after { content: ""; width: 1px; height: 50px; margin-left: 14px; background: #777; }
```
